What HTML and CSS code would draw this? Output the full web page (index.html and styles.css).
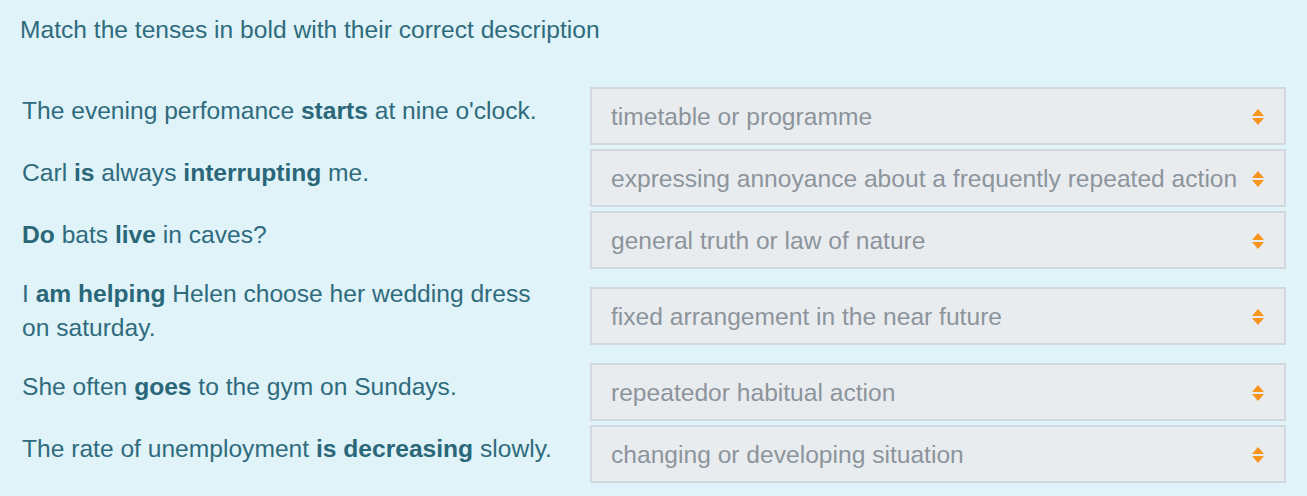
FILE: index.html
```html
<!DOCTYPE html>
<html lang="en">
<head>
    <meta charset="UTF-8">
    <meta name="viewport" content="width=device-width, initial-scale=1.0">
    <title>Match the tenses</title>
    <link rel="stylesheet" href="styles.css">
</head>
<body>
    <main class="exercise">
        <p class="instructions">Match the tenses in bold with their correct description</p>

        <div class="match-list">
            <div class="match-row">
                <div class="sentence">The evening perfomance <b>starts</b> at nine o'clock.</div>
                <div class="select-box">
                    <span>timetable or programme</span>
                    <span class="arrows"></span>
                </div>
            </div>
            <div class="match-row">
                <div class="sentence">Carl <b>is</b> always <b>interrupting</b> me.</div>
                <div class="select-box">
                    <span>expressing annoyance about a frequently repeated action</span>
                    <span class="arrows"></span>
                </div>
            </div>
            <div class="match-row">
                <div class="sentence"><b>Do</b> bats <b>live</b> in caves?</div>
                <div class="select-box">
                    <span>general truth or law of nature</span>
                    <span class="arrows"></span>
                </div>
            </div>
            <div class="match-row">
                <div class="sentence">I <b>am helping</b> Helen choose her wedding dress on saturday.</div>
                <div class="select-box">
                    <span>fixed arrangement in the near future</span>
                    <span class="arrows"></span>
                </div>
            </div>
            <div class="match-row">
                <div class="sentence">She often <b>goes</b> to the gym on Sundays.</div>
                <div class="select-box">
                    <span>repeatedor habitual action</span>
                    <span class="arrows"></span>
                </div>
            </div>
            <div class="match-row">
                <div class="sentence">The rate of unemployment <b>is decreasing</b> slowly.</div>
                <div class="select-box">
                    <span>changing or developing situation</span>
                    <span class="arrows"></span>
                </div>
            </div>
        </div>
    </main>
</body>
</html>
```

FILE: styles.css
```css
body {
    margin: 0;
    background-color: #dff3f9;
    font-family: "Liberation Sans", Arial, sans-serif;
    color: #2f6b7d;
}

.exercise {
    padding: 0 21px 0 22px;
}

.instructions {
    margin: 0 0 0 -2px;
    padding-top: 15px;
    height: 70px;
    font-size: 24.6px;
    line-height: 30px;
}

.match-row {
    display: grid;
    grid-template-columns: 568px 1fr;
    align-items: center;
    min-height: 62px;
}

.sentence {
    font-size: 24.6px;
    line-height: 34px;
    padding: 6px 30px 16px 0;
}

.sentence b {
    color: #2a6779;
}

.select-box {
    display: flex;
    align-items: center;
    justify-content: space-between;
    height: 58px;
    box-sizing: border-box;
    margin: 2px 0;
    padding: 2px 20px 0 19px;
    background-color: #e9ecef;
    border: 2px solid #d2d8dd;
    color: #8c949c;
    font-size: 24.6px;
    white-space: nowrap;
}

.arrows {
    display: flex;
    flex-direction: column;
    gap: 2px;
    flex-shrink: 0;
}

.arrows::before,
.arrows::after {
    content: "";
    width: 0;
    height: 0;
    border-left: 6px solid transparent;
    border-right: 6px solid transparent;
}

.arrows::before {
    border-bottom: 7px solid #f7941d;
}

.arrows::after {
    border-top: 7px solid #f7941d;
}
```
